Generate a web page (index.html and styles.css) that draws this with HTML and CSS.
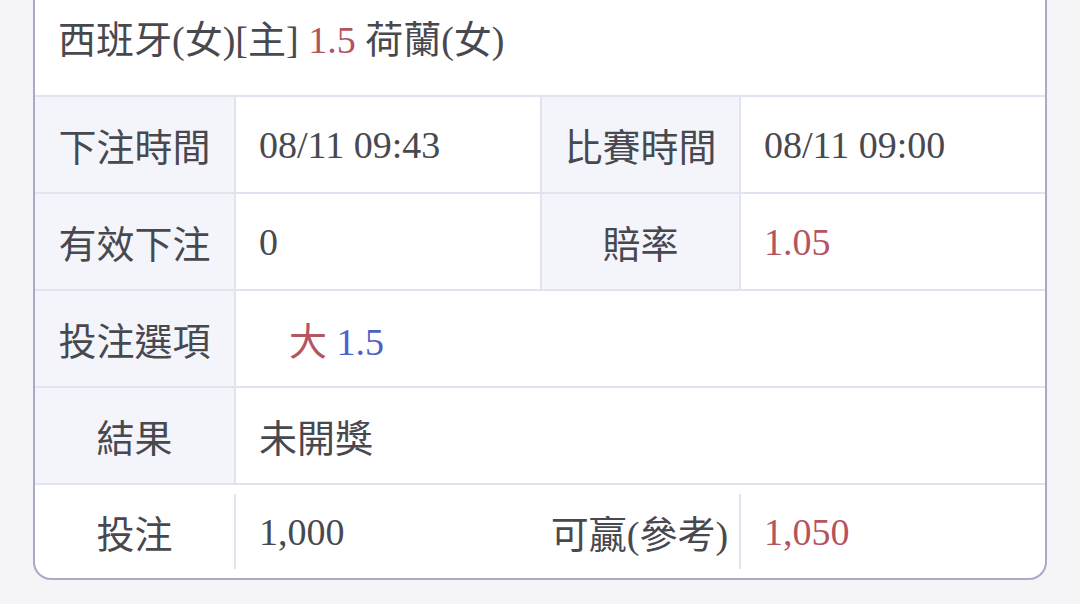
FILE: index.html
```html
<!DOCTYPE html>
<html lang="zh-Hant">
<head>
<meta charset="utf-8">
<link rel="stylesheet" href="styles.css">
</head>
<body>
<div class="card">
  <div class="title">西班牙(女)[主] <span class="red">1.5</span> 荷蘭(女)</div>
  <div class="grid">
    <div class="label">下注時間</div>
    <div class="value">08/11 09:43</div>
    <div class="label">比賽時間</div>
    <div class="value">08/11 09:00</div>

    <div class="label">有效下注</div>
    <div class="value">0</div>
    <div class="label">賠率</div>
    <div class="value red">1.05</div>

    <div class="label">投注選項</div>
    <div class="value wide"><span class="pick"><span class="red">大</span> <span class="blue">1.5</span></span></div>

    <div class="label">結果</div>
    <div class="value wide">未開獎</div>
  </div>
  <div class="foot">
    <div class="flabel">投注</div>
    <div class="fvalue"><span class="fline">1,000</span></div>
    <div class="flabel">可贏(參考)</div>
    <div class="fvalue"><span class="fline red">1,050</span></div>
  </div>
</div>
</body>
</html>
```
FILE: styles.css
```css
html, body {
  margin: 0;
  padding: 0;
  background: #f5f5f7;
}
body {
  padding: 0 33px;
  font-family: "Liberation Serif", "Noto Sans CJK TC", serif;
  color: #48484f;
  font-size: 38px;
}
.card {
  width: 1010px;
  background: #ffffff;
  border: 2px solid #a7aacb;
  border-top: none;
  border-radius: 0 0 18px 18px;
  overflow: hidden;
}
.title {
  height: 97px;
  box-sizing: border-box;
  padding: 14px 0 0 23px;
  line-height: 52px;
  font-size: 38px;
  border-bottom: 2px solid #e2e3f0;
}
.red { color: #b4545e; }
.blue { color: #4d62c6; }
.grid {
  display: grid;
  grid-template-columns: 199px 304px 197px 304px;
  grid-auto-rows: 95px;
  gap: 2px;
  background: #e2e3f0;
  border-bottom: 2px solid #e2e3f0;
}
.label {
  background: #f4f5fb;
  display: flex;
  align-items: center;
  justify-content: center;
}
.value {
  background: #ffffff;
  display: flex;
  align-items: center;
  padding-left: 23px;
}
.wide {
  grid-column: 2 / 5;
}
.pick {
  margin-left: 30px;
}
.foot {
  display: grid;
  grid-template-columns: 199px 306px 199px 306px;
  height: 93px;
  align-items: center;
}
.flabel {
  display: flex;
  justify-content: center;
  align-items: center;
}
.fvalue {
  display: flex;
  align-items: center;
}
.fline {
  display: flex;
  align-items: center;
  height: 75px;
  border-left: 2px solid #e2e3f0;
  padding-left: 23px;
}
```
